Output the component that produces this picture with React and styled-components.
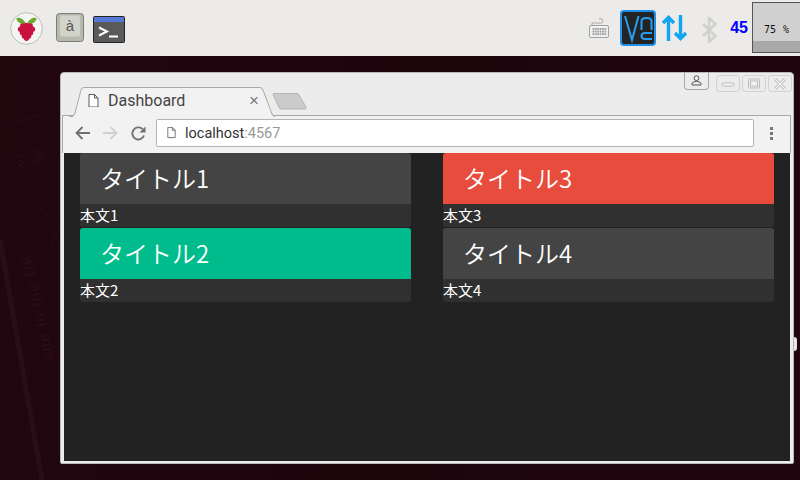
import styled, { createGlobalStyle } from "styled-components";

const cards = [
  [
    { title: "タイトル1", body: "本文1", color: "#444444" },
    { title: "タイトル2", body: "本文2", color: "#00bc8c" },
  ],
  [
    { title: "タイトル3", body: "本文3", color: "#e74c3c" },
    { title: "タイトル4", body: "本文4", color: "#444444" },
  ],
];

function RaspberryIcon() {
  const berries = [
    [20, 22], [26, 21], [32, 22], [16.5, 27], [23, 27], [29, 27], [35.5, 27],
    [19.5, 32.5], [26, 32.5], [32.5, 32.5], [22.5, 38], [29.5, 38], [26, 41.5],
  ];
  return (
    <svg width="33" height="33" viewBox="0 0 52 52">
      <circle cx="26" cy="26" r="25" fill="#f4f4f2" stroke="#b9b9b7" strokeWidth="1.5" />
      <path d="M25 18 C20 9 13 8 10 10 C11 17 18 20 25 19Z" fill="#6aa82e" />
      <path d="M27 18 C32 9 39 8 42 10 C41 17 34 20 27 19Z" fill="#6aa82e" />
      {berries.map(([x, y]) => (
        <circle key={`${x}-${y}`} cx={x} cy={y} r="4.1" fill="#c8123f" />
      ))}
    </svg>
  );
}

function KeyIcon() {
  return (
    <svg width="28" height="30" viewBox="0 0 28 30">
      <rect x="0.5" y="0.5" width="27" height="28" rx="3" fill="#b8b9ae" stroke="#7c7d76" />
      <rect x="4" y="2.5" width="20" height="21" rx="2" fill="#d2d3ca" />
      <text x="14" y="18" textAnchor="middle" fontSize="15" fontFamily="'Liberation Sans', sans-serif" fill="#555">à</text>
    </svg>
  );
}

function TerminalIcon() {
  return (
    <svg width="32" height="28" viewBox="0 0 32 28">
      <rect x="0.5" y="0.5" width="31" height="26" rx="1" fill="#5a5a5a" stroke="#222" />
      <rect x="1" y="1" width="30" height="5" fill="#5578d8" />
      <path d="M6 11.5 L14 15.5 L6 19.5" fill="none" stroke="#fff" strokeWidth="2" />
      <path d="M16 20.5 H25" stroke="#fff" strokeWidth="2" />
    </svg>
  );
}

function KeyboardIcon() {
  const keys = [];
  for (let r = 0; r < 3; r++) {
    for (let c = 0; c < 6; c++) {
      keys.push(<rect key={`${r}-${c}`} x={3.5 + c * 2.4} y={10 + r * 2.6} width="1.8" height="1.9" fill="#a0a0a0" />);
    }
  }
  return (
    <svg width="20" height="20" viewBox="0 0 20 20">
      <path d="M3 7 V5 H12 Q13.5 5 13.5 3.5 V2 Q13.5 .8 12 .8 H10" fill="none" stroke="#aaa" strokeWidth="1" />
      <rect x="0.5" y="7.5" width="19" height="12" rx="1.5" fill="#f2f2f0" stroke="#a0a0a0" />
      {keys}
    </svg>
  );
}

function VncIcon() {
  return (
    <svg width="36" height="36" viewBox="0 0 36 36">
      <rect x="1" y="1" width="34" height="34" rx="3" fill="#222426" stroke="#1f8fe8" strokeWidth="2" />
      <path d="M5 6 L12 30 L18.5 6" fill="none" stroke="#2a9cf0" strokeWidth="2" />
      <path d="M21.5 20 V11 Q21.5 8 26.5 8 Q31.5 8 31.5 11 V20" fill="none" stroke="#2a9cf0" strokeWidth="2" />
      <path d="M32 23 H25 Q21.5 23 21.5 26 Q21.5 29 25 29 H32" fill="none" stroke="#2a9cf0" strokeWidth="2" />
    </svg>
  );
}

function TransferIcon() {
  return (
    <svg width="25" height="26" viewBox="0 0 25 26">
      <path d="M6.5 26 V2 M1 8 L6.5 2.5 L12 8" fill="none" stroke="#12a5f4" strokeWidth="3.4" />
      <path d="M18.5 0 V24 M13 18 L18.5 23.5 L24 18" fill="none" stroke="#12a5f4" strokeWidth="3.4" />
    </svg>
  );
}

function BluetoothIcon() {
  return (
    <svg width="15" height="26" viewBox="0 0 15 26">
      <path d="M1 7 L13.5 19 L7 25 V1 L13.5 7 L1 19" fill="none" stroke="#d0d0ce" strokeWidth="2.6" />
    </svg>
  );
}

function PageIcon({ size = 11 }) {
  return (
    <svg width={size} height={size * 1.25} viewBox="0 0 11 13.75">
      <path d="M1 .5 H6.5 L10 4 V13 H1Z M6.5 .5 V4 H10" fill="#fff" stroke="#5a5a5a" />
    </svg>
  );
}

function App() {
  return (
    <>
      <GlobalStyle />
      <Desktop>
        <Panel>
          <Launchers>
            <RaspberryIcon />
            <KeyIcon />
            <TerminalIcon />
          </Launchers>
          <Tray>
            <KeyboardIcon />
            <VncIcon />
            <TransferIcon />
            <BluetoothIcon />
            <Clock>45</Clock>
            <CpuMeter>
              <CpuLabel>75 %</CpuLabel>
            </CpuMeter>
          </Tray>
        </Panel>
        <Wallpaper>
          <svg width="800" height="424" viewBox="0 0 800 424">
            <g fill="none" stroke="#2b0e17">
              <path d="M0 74 L60 50" />
              <path d="M26 140 L60 170 M44 205 L60 170" />
              <path d="M0 184 L42 424" stroke="#2a0e17" strokeWidth="5" />
            </g>
            <g fill="#2d0e18" fontFamily="'Liberation Sans', sans-serif">
              <text transform="translate(54 304) rotate(-102)" fontSize="15" letterSpacing="1.5">ade in the UK</text>
              <text transform="translate(24 112) rotate(-75)" fontSize="11">R1</text>
              <text transform="translate(41 108) rotate(-75)" fontSize="11">R2</text>
            </g>
          </svg>
        </Wallpaper>
        <WindowHandle />
        <Window>
          <UserButton>
            <svg width="11" height="11" viewBox="0 0 11 11">
              <circle cx="5.5" cy="3.2" r="2.4" fill="none" stroke="#555" />
              <path d="M1 10 V8.2 Q3 6.4 5.5 6.4 Q8 6.4 10 8.2 V10Z" fill="none" stroke="#555" />
            </svg>
          </UserButton>
          <WindowControls>
            <WindowControl>
              <svg width="14" height="8" viewBox="0 0 14 8"><rect x="1" y="3" width="12" height="3" rx="1" fill="#f4f4f4" stroke="#bbb" /></svg>
            </WindowControl>
            <WindowControl>
              <svg width="14" height="11" viewBox="0 0 14 11"><rect x="1.5" y="1" width="11" height="9" rx="1" fill="none" stroke="#bbb" /><rect x="3.5" y="3" width="7" height="5" fill="#f4f4f4" stroke="#bbb" /></svg>
            </WindowControl>
            <WindowControl>
              <svg width="14" height="12" viewBox="0 0 14 12"><path d="M2 1 L12 11 M12 1 L2 11" stroke="#bbb" strokeWidth="3" /><path d="M2 1 L12 11 M12 1 L2 11" stroke="#f4f4f4" strokeWidth="1.2" /></svg>
            </WindowControl>
          </WindowControls>
          <TabStrip>
            <Tab>
              <TabShape width="206" height="30" viewBox="0 0 206 30">
                <path d="M0 29.5 H3 Q5 29.5 6 26 L12 3 Q12.6 .5 15 .5 H191 Q193 .5 194 3 L203 27 Q204 29.5 206 29.5" fill="#f2f2f2" stroke="#a8a8a8" />
              </TabShape>
              <PageIcon />
              <TabTitle>Dashboard</TabTitle>
              <TabClose>×</TabClose>
            </Tab>
            <NewTab>
              <svg width="35" height="17" viewBox="0 0 35 17">
                <path d="M1 1.5 Q1 .5 2 .5 H25 Q26 .5 27 2 L34 14 Q34.5 16 33 16 H9 Q7.5 16 7 14.5Z" fill="#cbcbcb" stroke="#b4b4b4" />
              </svg>
            </NewTab>
          </TabStrip>
          <Toolbar>
            <NavIcon>
              <svg width="15" height="14" viewBox="0 0 15 14"><path d="M15 7 H2 M7.5 1 L1.5 7 L7.5 13" fill="none" stroke="#6f6f6f" strokeWidth="1.8" /></svg>
            </NavIcon>
            <NavIcon>
              <svg width="15" height="14" viewBox="0 0 15 14"><path d="M0 7 H13 M7.5 1 L13.5 7 L7.5 13" fill="none" stroke="#d0d0d0" strokeWidth="1.8" /></svg>
            </NavIcon>
            <NavIcon>
              <svg width="15" height="15" viewBox="0 0 15 15"><path d="M13 9.5 A6 6 0 1 1 11.6 3.2" fill="none" stroke="#6f6f6f" strokeWidth="1.8" /><path d="M14.5 .5 V6.5 H8.5Z" fill="#6f6f6f" /></svg>
            </NavIcon>
            <AddressBar>
              <PageIcon size={9} />
              <Url>
                localhost<UrlPort>:4567</UrlPort>
              </Url>
            </AddressBar>
            <MenuDots>
              <i />
              <i />
              <i />
            </MenuDots>
          </Toolbar>
          <Page>
            {cards.map((column) => (
              <Column key={column[0].title}>
                {column.map((card) => (
                  <Card key={card.title}>
                    <CardTitle $color={card.color}>{card.title}</CardTitle>
                    <CardBody>{card.body}</CardBody>
                  </Card>
                ))}
              </Column>
            ))}
          </Page>
        </Window>
      </Desktop>
    </>
  );
}

const GlobalStyle = createGlobalStyle`
  html, body {
    margin: 0;
    padding: 0;
    overflow: hidden;
  }
`;

const Desktop = styled.div`
  position: relative;
  width: 800px;
  height: 480px;
  overflow: hidden;
  background: #1e060d;
  display: flex;
  flex-direction: column;
`;

const Panel = styled.div`
  height: 56px;
  background: #ecebe9;
  display: flex;
  align-items: center;
  justify-content: space-between;
`;

const Launchers = styled.div`
  display: flex;
  align-items: center;
  gap: 13px;
  padding-left: 10px;

  svg:nth-child(3) {
    margin: 3px 0 0 -4px;
  }
`;

const Tray = styled.div`
  display: flex;
  align-items: center;
  height: 56px;

  svg:nth-child(2) {
    margin: -1px 0 0 11px;
  }
  svg:nth-child(3) {
    margin-left: 6px;
  }
  svg:nth-child(4) {
    margin: 3px 0 0 15px;
  }
`;

const Clock = styled.span`
  font-family: "Liberation Sans", sans-serif;
  font-weight: 700;
  font-size: 16px;
  color: #0000ff;
  margin-left: 13px;
`;

const CpuMeter = styled.div`
  align-self: flex-start;
  margin: 2px 0 0 4px;
  width: 48px;
  height: 51px;
  box-sizing: border-box;
  border: 1px solid #555;
  border-right: none;
  background: linear-gradient(#d0d0d0 0 38px, #a9a9a9 38px);
  display: flex;
  align-items: center;
  justify-content: center;
`;

const CpuLabel = styled.span`
  font-family: "DejaVu Sans Mono", monospace;
  font-size: 10px;
  color: #111;
  white-space: pre;
  word-spacing: 1px;
  margin-top: 4px;
`;

const Wallpaper = styled.div`
  flex: 1;
  background: linear-gradient(100deg, #22070f, #1d050c 50%, #20070f);
  line-height: 0;
`;

const WindowHandle = styled.div`
  position: absolute;
  left: 794px;
  top: 337px;
  width: 3px;
  height: 14px;
  background: #e6e6e6;
  border-radius: 0 3px 3px 0;
`;

const Window = styled.div`
  position: absolute;
  left: 60px;
  top: 72px;
  width: 734px;
  height: 392px;
  box-sizing: border-box;
  padding: 0 3px 2px;
  background: #ececec;
  border: 1px solid #b8b8b8;
  border-radius: 4px 4px 2px 2px;
  display: flex;
  flex-direction: column;
`;

const UserButton = styled.div`
  position: absolute;
  top: -1px;
  right: 84px;
  width: 25px;
  height: 18px;
  box-sizing: border-box;
  border: 1px solid #a8a8a8;
  border-top: none;
  border-radius: 0 0 4px 4px;
  display: flex;
  align-items: center;
  justify-content: center;
`;

const WindowControls = styled.div`
  position: absolute;
  top: 2px;
  right: 1px;
  display: flex;
  gap: 2px;
`;

const WindowControl = styled.div`
  width: 24px;
  height: 17px;
  box-sizing: border-box;
  border: 1px solid #d2d2d2;
  border-radius: 3px;
  display: flex;
  align-items: center;
  justify-content: center;
`;

const TabStrip = styled.div`
  height: 42px;
  display: flex;
  align-items: flex-end;
  margin-left: 5px;
`;

const Tab = styled.div`
  position: relative;
  width: 206px;
  height: 29px;
  box-sizing: border-box;
  padding: 0 16px 2px 19px;
  display: flex;
  align-items: center;
  gap: 9px;
  z-index: 1;
  margin-bottom: -1px;
`;

const TabShape = styled.svg`
  position: absolute;
  left: 0;
  top: 0;
  z-index: -1;
`;

const TabTitle = styled.span`
  flex: 1;
  font-family: Roboto, sans-serif;
  font-size: 16px;
  color: #444;
`;

const TabClose = styled.span`
  font-family: "Liberation Sans", sans-serif;
  font-size: 17px;
  color: #777;
`;

const NewTab = styled.div`
  align-self: flex-start;
  margin: 20px 0 0 -3px;
  line-height: 0;
`;

const Toolbar = styled.div`
  height: 38px;
  margin: 0 -1px 0 -2px;
  padding: 0 0 3px 11px;
  box-sizing: border-box;
  background: #f2f2f2;
  border: 1px solid #a8a8a8;
  border-bottom: none;
  display: flex;
  align-items: center;
  gap: 12px;
`;

const NavIcon = styled.div`
  width: 16px;
  display: flex;
  justify-content: center;
`;

const AddressBar = styled.div`
  width: 598px;
  height: 28px;
  box-sizing: border-box;
  margin-left: -2px;
  padding-left: 10px;
  background: #fff;
  border: 1px solid #b4b4b4;
  border-radius: 2px;
  display: flex;
  align-items: center;
  gap: 9px;
`;

const Url = styled.span`
  font-family: Roboto, sans-serif;
  font-size: 14.5px;
  color: #333;
`;

const UrlPort = styled.span`
  color: #999;
`;

const MenuDots = styled.div`
  margin-left: 4px;
  display: flex;
  flex-direction: column;
  gap: 2px;
  i {
    width: 3px;
    height: 3px;
    background: #777;
  }
`;

const Page = styled.div`
  flex: 1;
  background: #222222;
  display: grid;
  grid-template-columns: 1fr 1fr;
  align-items: start;
  gap: 32px;
  padding: 0 16px;
`;

const Column = styled.div`
  display: flex;
  flex-direction: column;
  gap: 1px;
`;

const Card = styled.div`
  height: 74px;
  background: #303030;
  border-radius: 3px;
  overflow: hidden;
`;

const CardTitle = styled.div`
  height: 51px;
  box-sizing: border-box;
  background: ${(props) => props.$color};
  padding: 0 0 3px 20px;
  display: flex;
  align-items: center;
  font-family: "Noto Sans CJK JP", sans-serif;
  font-size: 24px;
  font-weight: 350;
  color: #fff;
`;

const CardBody = styled.div`
  font-family: "Noto Sans CJK JP", sans-serif;
  font-size: 15px;
  line-height: 21px;
  color: #fff;
`;

export default App;
